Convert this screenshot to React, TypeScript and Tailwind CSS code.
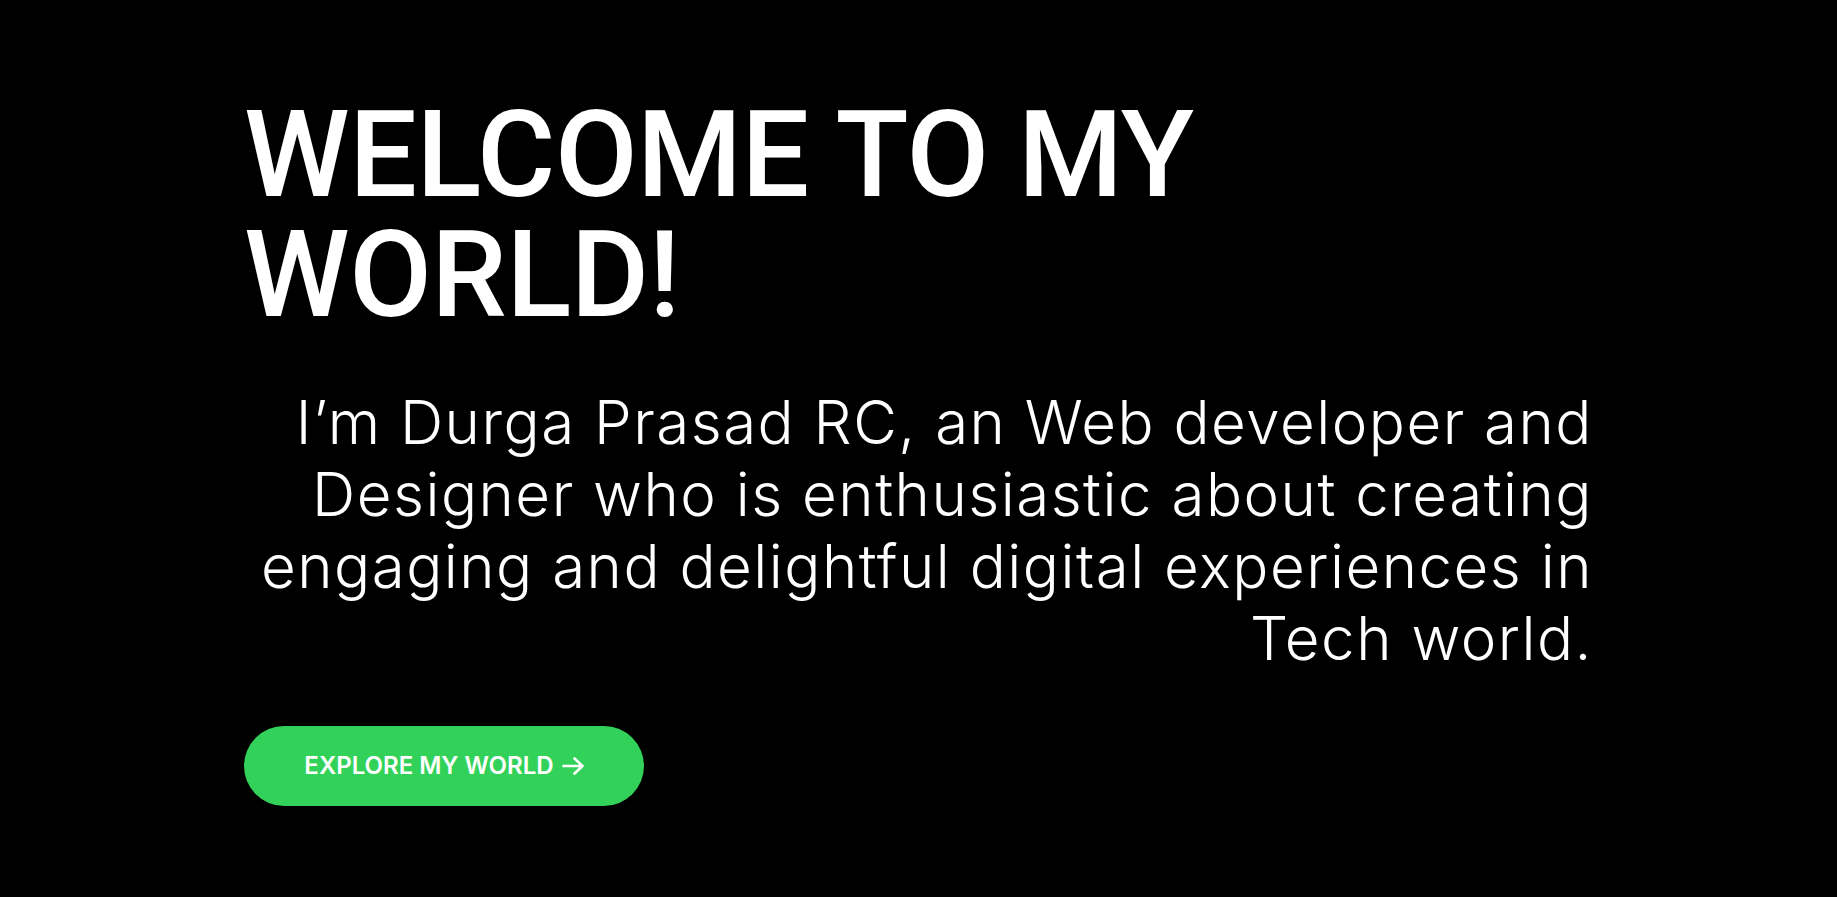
const lines = [
  "I’m Durga Prasad RC, an Web developer and",
  "Designer who is enthusiastic about creating",
  "engaging and delightful digital experiences in",
  "Tech world.",
];

export default function App() {
  return (
    <main className="min-h-screen bg-black text-white font-['Inter','Liberation_Sans',sans-serif]">
      <section className="mx-auto max-w-[1349px] pt-[95px]">
        <h1 className="font-['Roboto','Inter',sans-serif] text-[120px] leading-[120px] font-medium uppercase tracking-[-0.004em]">
          <span className="block">Welcome to my</span>
          <span className="block">world!</span>
        </h1>

        <p className="mt-[51px] text-right text-[60px] leading-[72px] font-light tracking-[0.025em]">
          {lines.map((line) => (
            <span key={line} className="block">
              {line}
            </span>
          ))}
        </p>

        <button className="mt-[52px] flex h-20 w-[400px] items-center justify-center gap-2 rounded-full bg-[#32d25a] text-2xl font-semibold uppercase text-white">
          Explore my world
          <svg width="22" height="18" viewBox="0 0 22 18" fill="none" stroke="currentColor" strokeWidth={2.6} strokeLinecap="round" strokeLinejoin="round">
            <path d="M1.5 9h19M12.5 1.5 20.5 9l-8 7.5" />
          </svg>
        </button>
      </section>
    </main>
  );
}
